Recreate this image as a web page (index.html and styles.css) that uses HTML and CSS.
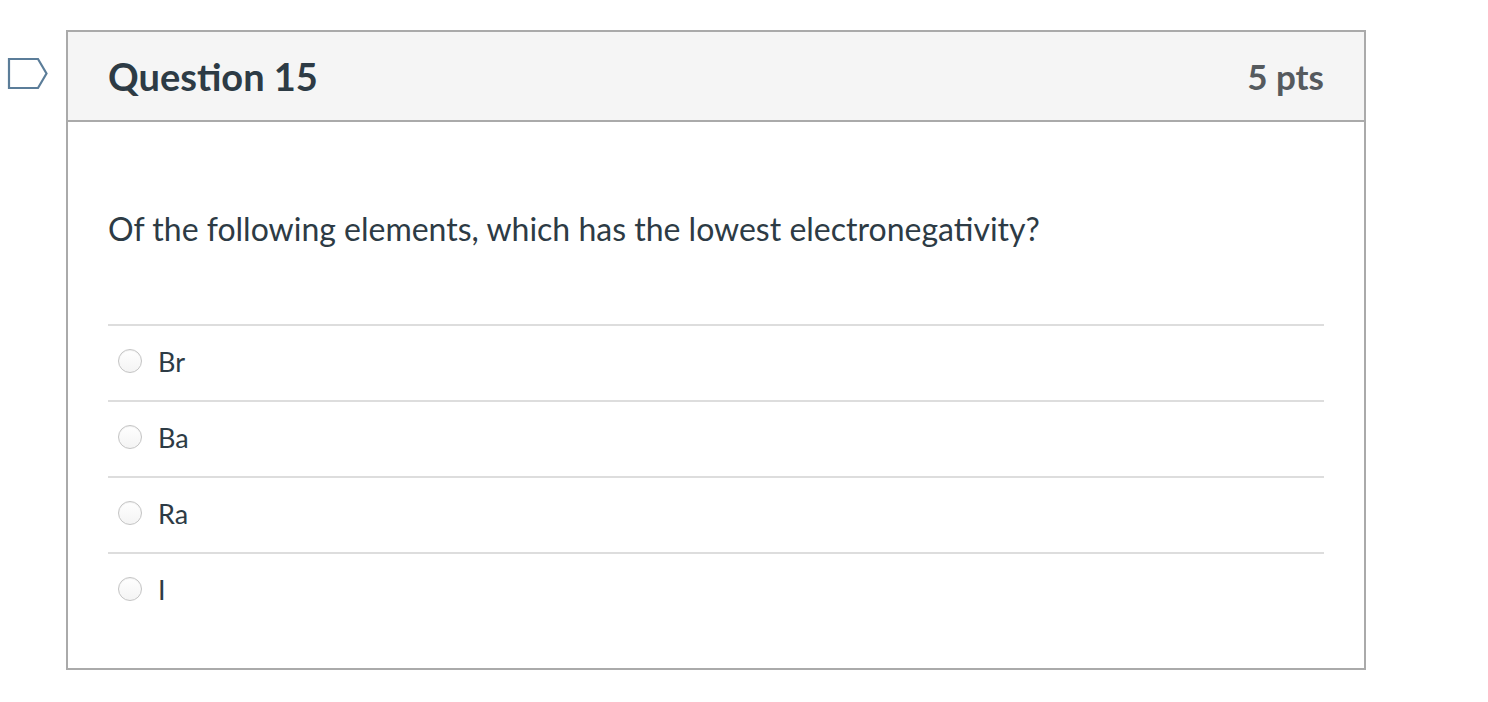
FILE: index.html
```html
<!DOCTYPE html>
<html>
<head>
<meta charset="utf-8">
<link rel="stylesheet" href="styles.css">
</head>
<body>
<div class="page">
  <div class="flag-col">
    <svg class="flag" width="42" height="34" viewBox="0 0 42 34">
      <path d="M2 2 H31 L39.5 16.5 L31 31 H2 Z" fill="none" stroke="#5b7d99" stroke-width="2.2" stroke-linejoin="miter"/>
    </svg>
  </div>
  <div class="card">
    <div class="card-header">
      <h2 class="q-title">Question 15</h2>
      <div class="q-points">5 pts</div>
    </div>
    <div class="card-body">
      <p class="q-text">Of the following elements, which has the lowest electronegativity?</p>
      <div class="answers">
        <label class="answer"><span class="radio"></span><span class="label">Br</span></label>
        <label class="answer"><span class="radio"></span><span class="label">Ba</span></label>
        <label class="answer"><span class="radio"></span><span class="label">Ra</span></label>
        <label class="answer"><span class="radio"></span><span class="label">I</span></label>
      </div>
    </div>
  </div>
</div>
</body>
</html>
```
FILE: styles.css
```css
html, body {
  margin: 0;
  padding: 0;
  background: #fff;
}
body {
  font-family: Lato, "Open Sans", sans-serif;
  color: #2d3b45;
}
.page {
  display: flex;
  padding-top: 30px;
}
.flag-col {
  width: 66px;
  flex: 0 0 66px;
  padding-top: 27px;
  padding-left: 7px;
  box-sizing: border-box;
}
.flag {
  display: block;
}
.card {
  width: 1300px;
  height: 640px;
  box-sizing: border-box;
  border: 2px solid #aaaaaa;
  display: flex;
  flex-direction: column;
}
.card-header {
  height: 90px;
  box-sizing: border-box;
  background: #f5f5f5;
  border-bottom: 2px solid #aaaaaa;
  display: flex;
  align-items: center;
  justify-content: space-between;
  padding: 0 40px;
}
.q-title {
  margin: 0;
  font-size: 38px;
  font-weight: 700;
  color: #2d3b45;
}
.q-points {
  font-size: 35px;
  font-weight: 700;
  color: #555a5e;
}
.card-body {
  padding: 0 40px;
}
.q-text {
  margin: 0;
  height: 202px;
  box-sizing: border-box;
  padding-top: 10px;
  display: flex;
  align-items: center;
  font-size: 32px;
  color: #2d3b45;
}
.answers {
  display: flex;
  flex-direction: column;
}
.answer {
  display: flex;
  align-items: center;
  height: 76px;
  border-top: 2px solid #dddddd;
  padding-left: 10px;
  padding-bottom: 4px;
  box-sizing: border-box;
}
.radio {
  width: 22px;
  height: 22px;
  border-radius: 50%;
  border: 1px solid #c4c4c4;
  background: linear-gradient(#fff, #f4f4f4);
  box-shadow: inset 0 1px 1px rgba(0,0,0,0.06);
  margin-right: 16px;
  flex: 0 0 auto;
}
.label {
  font-size: 27px;
  color: #2d3b45;
}
```
